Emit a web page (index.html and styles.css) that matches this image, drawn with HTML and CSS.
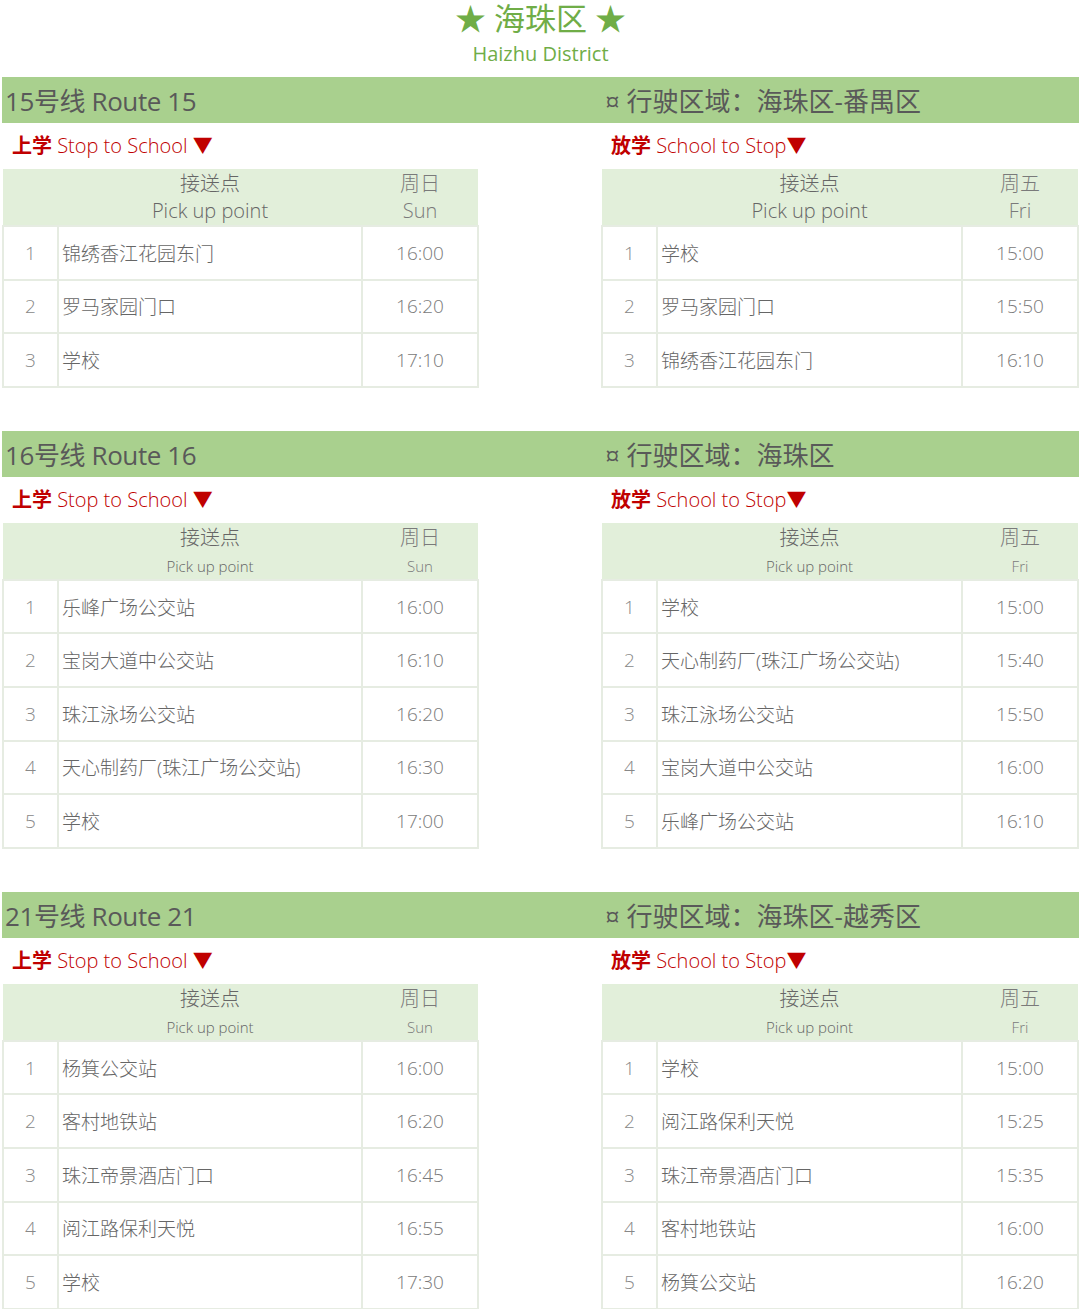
FILE: index.html
```html
<!DOCTYPE html>
<html lang="zh-CN">
<head>
  <meta charset="UTF-8" />
  <meta name="viewport" content="width=device-width,initial-scale=1.0" />
  <title>海珠区 Haizhu District</title>
  <link rel="stylesheet" href="styles.css">
</head>
<body>
  <!-- District heading -->
  <div class="district">
    <h1>★ 海珠区 ★</h1>
    <h2>Haizhu District</h2>
  </div>

  <!-- Route 15 -->
  <div class="route">
    <div class="route-bar">
      <div class="route-name">15号线 Route 15</div>
      <div class="route-area">¤ 行驶区域：海珠区-番禺区</div>
    </div>

    <div class="half">
      <div class="direction"><b>上学</b> Stop to School ▼</div>
      <table class="schedule">
        <tr class="head">
          <th class="num"></th>
          <th class="stop">接送点<br><span class="en big">Pick up point</span></th>
          <th class="time">周日<br><span class="en big">Sun</span></th>
        </tr>
        <tr><td class="num">1</td><td class="stop">锦绣香江花园东门</td><td class="time">16:00</td></tr>
        <tr><td class="num">2</td><td class="stop">罗马家园门口</td><td class="time">16:20</td></tr>
        <tr><td class="num">3</td><td class="stop">学校</td><td class="time">17:10</td></tr>
      </table>
    </div>

    <div class="half">
      <div class="direction"><b>放学</b> School to Stop▼</div>
      <table class="schedule">
        <tr class="head">
          <th class="num"></th>
          <th class="stop">接送点<br><span class="en big">Pick up point</span></th>
          <th class="time">周五<br><span class="en big">Fri</span></th>
        </tr>
        <tr><td class="num">1</td><td class="stop">学校</td><td class="time">15:00</td></tr>
        <tr><td class="num">2</td><td class="stop">罗马家园门口</td><td class="time">15:50</td></tr>
        <tr><td class="num">3</td><td class="stop">锦绣香江花园东门</td><td class="time">16:10</td></tr>
      </table>
    </div>
  </div>

  <!-- Route 16 -->
  <div class="route">
    <div class="route-bar">
      <div class="route-name">16号线 Route 16</div>
      <div class="route-area">¤ 行驶区域：海珠区</div>
    </div>

    <div class="half">
      <div class="direction"><b>上学</b> Stop to School ▼</div>
      <table class="schedule">
        <tr class="head">
          <th class="num"></th>
          <th class="stop">接送点<br><span class="en">Pick up point</span></th>
          <th class="time">周日<br><span class="en">Sun</span></th>
        </tr>
        <tr><td class="num">1</td><td class="stop">乐峰广场公交站</td><td class="time">16:00</td></tr>
        <tr><td class="num">2</td><td class="stop">宝岗大道中公交站</td><td class="time">16:10</td></tr>
        <tr><td class="num">3</td><td class="stop">珠江泳场公交站</td><td class="time">16:20</td></tr>
        <tr><td class="num">4</td><td class="stop">天心制药厂(珠江广场公交站)</td><td class="time">16:30</td></tr>
        <tr><td class="num">5</td><td class="stop">学校</td><td class="time">17:00</td></tr>
      </table>
    </div>

    <div class="half">
      <div class="direction"><b>放学</b> School to Stop▼</div>
      <table class="schedule">
        <tr class="head">
          <th class="num"></th>
          <th class="stop">接送点<br><span class="en">Pick up point</span></th>
          <th class="time">周五<br><span class="en">Fri</span></th>
        </tr>
        <tr><td class="num">1</td><td class="stop">学校</td><td class="time">15:00</td></tr>
        <tr><td class="num">2</td><td class="stop">天心制药厂(珠江广场公交站)</td><td class="time">15:40</td></tr>
        <tr><td class="num">3</td><td class="stop">珠江泳场公交站</td><td class="time">15:50</td></tr>
        <tr><td class="num">4</td><td class="stop">宝岗大道中公交站</td><td class="time">16:00</td></tr>
        <tr><td class="num">5</td><td class="stop">乐峰广场公交站</td><td class="time">16:10</td></tr>
      </table>
    </div>
  </div>

  <!-- Route 21 -->
  <div class="route">
    <div class="route-bar">
      <div class="route-name">21号线 Route 21</div>
      <div class="route-area">¤ 行驶区域：海珠区-越秀区</div>
    </div>

    <div class="half">
      <div class="direction"><b>上学</b> Stop to School ▼</div>
      <table class="schedule">
        <tr class="head">
          <th class="num"></th>
          <th class="stop">接送点<br><span class="en">Pick up point</span></th>
          <th class="time">周日<br><span class="en">Sun</span></th>
        </tr>
        <tr><td class="num">1</td><td class="stop">杨箕公交站</td><td class="time">16:00</td></tr>
        <tr><td class="num">2</td><td class="stop">客村地铁站</td><td class="time">16:20</td></tr>
        <tr><td class="num">3</td><td class="stop">珠江帝景酒店门口</td><td class="time">16:45</td></tr>
        <tr><td class="num">4</td><td class="stop">阅江路保利天悦</td><td class="time">16:55</td></tr>
        <tr><td class="num">5</td><td class="stop">学校</td><td class="time">17:30</td></tr>
      </table>
    </div>

    <div class="half">
      <div class="direction"><b>放学</b> School to Stop▼</div>
      <table class="schedule">
        <tr class="head">
          <th class="num"></th>
          <th class="stop">接送点<br><span class="en">Pick up point</span></th>
          <th class="time">周五<br><span class="en">Fri</span></th>
        </tr>
        <tr><td class="num">1</td><td class="stop">学校</td><td class="time">15:00</td></tr>
        <tr><td class="num">2</td><td class="stop">阅江路保利天悦</td><td class="time">15:25</td></tr>
        <tr><td class="num">3</td><td class="stop">珠江帝景酒店门口</td><td class="time">15:35</td></tr>
        <tr><td class="num">4</td><td class="stop">客村地铁站</td><td class="time">16:00</td></tr>
        <tr><td class="num">5</td><td class="stop">杨箕公交站</td><td class="time">16:20</td></tr>
      </table>
    </div>
  </div>
</body>
</html>
```

FILE: styles.css
```css
/* Base */
body {
  margin: 0;
  padding: 0 1px 0 2px;
  background: #ffffff;
  color: #666666;
  font-family: "Open Sans", "Noto Sans CJK SC", sans-serif;
  font-weight: 300;
}

/* District heading */
.district {
  height: 77px;
  display: flex;
  flex-direction: column;
  align-items: center;
  color: #70ad47;
}
.district h1 {
  margin: 0;
  padding-top: 2px;
  font-size: 31px;
  font-weight: 400;
  line-height: 32px;
}
.district h2 {
  margin: 0;
  margin-top: 3px;
  font-size: 20px;
  font-weight: 400;
  line-height: 34px;
}

/* Route block: two halves with a gap in between */
.route {
  display: grid;
  grid-template-columns: 477px 478px;
  column-gap: 122px;
  margin-bottom: 43px;
}
.route:last-child {
  margin-bottom: 0;
}

.route-bar {
  grid-column: 1 / -1;
  display: grid;
  grid-template-columns: 477px 478px;
  column-gap: 122px;
  height: 46px;
  align-items: center;
  background: #a9d08e;
  color: #595959;
  font-size: 26px;
  font-weight: 400;
}
.route-name {
  padding-left: 3px;
  letter-spacing: -0.4px;
}
.route-area {
  padding-left: 4px;
  white-space: nowrap;
}

/* Direction label */
.direction {
  height: 46px;
  line-height: 46px;
  padding-left: 10px;
  color: #c00000;
  font-size: 20px;
}
.direction b {
  font-weight: 700;
}

/* Schedule tables */
.schedule {
  width: 100%;
  border-collapse: collapse;
  table-layout: fixed;
  font-size: 19px;
}
.schedule td {
  height: 51.6px;
  border: 2px solid #e6ece2;
  padding: 0;
}
.schedule .head th {
  height: 56px;
  background: #e2efda;
  font-weight: 300;
  font-size: 20px;
  line-height: 27px;
  padding: 0;
  border: none;
  vertical-align: middle;
}
.schedule .en {
  font-size: 15px;
  line-height: 22px;
}
.schedule .en.big {
  font-size: 20px;
  line-height: 27px;
}
.schedule .num {
  width: 55px;
  text-align: center;
  color: #888888;
}
.schedule .stop {
  text-align: left;
  padding-left: 3px;
}
.schedule .head .stop {
  text-align: center;
  padding-left: 0;
}
.schedule .time {
  width: 116px;
  text-align: center;
  color: #7a7a7a;
}
```
